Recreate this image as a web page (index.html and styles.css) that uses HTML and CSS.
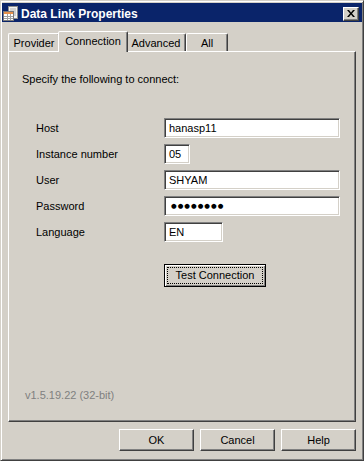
FILE: index.html
```html
<!DOCTYPE html>
<html>

<head>
    <title>Data Link Properties</title>
    <link rel="stylesheet" href="styles.css">
</head>

<body>
    <div class="window">
        <div class="titlebar">
            <svg class="app-icon" width="16" height="16" viewBox="0 0 16 16">
                <rect x="5.5" y="0.5" width="9" height="12" fill="#f2f2f2" stroke="#8c8c8c" />
                <path d="M7 3h6M7 5h6M7 7h6M7 9h6" stroke="#b0b0b0" />
                <rect x="0.5" y="5.5" width="10" height="9" fill="#fff" stroke="#7a7a7a" />
                <rect x="1" y="6" width="9" height="2" fill="#e8904a" />
                <path d="M1 10.5h9M1 12.5h9M4.5 8v6M7.5 8v6" stroke="#a0a0a0" />
            </svg>
            <span class="title">Data Link Properties</span>
            <button class="close-btn">
                <svg width="8" height="7" viewBox="0 0 8 7">
                    <path d="M0 0h2l2 2.4L6 0h2L5 3.5 8 7H6L4 4.6 2 7H0l3-3.5z" fill="#000" />
                </svg>
            </button>
        </div>
        <div class="dialog-body">
            <div class="tabs">
                <div class="tab tab-provider">Provider</div>
                <div class="tab tab-connection active">Connection</div>
                <div class="tab tab-advanced">Advanced</div>
                <div class="tab tab-all">All</div>
            </div>
            <div class="panel">
                <p class="intro">Specify the following to connect:</p>
                <div class="form">
                    <label>Host</label>
                    <div class="field field-wide">hanasp11</div>
                    <label>Instance number</label>
                    <div class="field field-short">05</div>
                    <label>User</label>
                    <div class="field field-wide">SHYAM</div>
                    <label>Password</label>
                    <div class="field field-wide dots">●●●●●●●●</div>
                    <label>Language</label>
                    <div class="field field-medium">EN</div>
                </div>
                <button class="btn btn-default test-btn"><span class="focus-ring">Test Connection</span></button>
                <div class="version">v1.5.19.22 (32-bit)</div>
            </div>
            <div class="actions">
                <button class="btn btn-action">OK</button>
                <button class="btn btn-action">Cancel</button>
                <button class="btn btn-action">Help</button>
            </div>
        </div>
    </div>
</body>

</html>
```
FILE: styles.css
```css
body {
    margin: 0;
    font-family: "Liberation Sans", Arial, sans-serif;
    font-size: 11px;
    background: #d4d0c8;
}

.window {
    width: 364px;
    height: 461px;
    box-sizing: border-box;
    background: #d4d0c8;
    border: 1px solid;
    border-color: #d4d0c8 #404040 #404040 #d4d0c8;
    box-shadow: inset 1px 1px #fff, inset -1px -1px #808080;
    padding: 2px 1px 1px 1px;
    display: flex;
    flex-direction: column;
}

/* title bar */
.titlebar {
    height: 19px;
    box-sizing: border-box;
    background: #0a246a;
    color: #fff;
    display: flex;
    align-items: center;
    padding: 2px 3px 0 1px;
}

.app-icon {
    flex: none;
    margin-right: 2px;
}

.title {
    flex: 1;
    font-weight: bold;
    font-size: 12px;
}

.close-btn {
    width: 16px;
    height: 14px;
    padding: 0;
    background: #d4d0c8;
    border: 1px solid;
    border-color: #fff #404040 #404040 #fff;
    box-shadow: inset -1px -1px #808080;
    display: flex;
    align-items: center;
    justify-content: center;
}

/* tabs + panel */
.dialog-body {
    flex: 1;
    padding: 9px 6px 0 6px;
    display: flex;
    flex-direction: column;
}

.tabs {
    display: flex;
    height: 20px;
    align-items: flex-end;
}

.tab {
    height: 18px;
    box-sizing: border-box;
    border: 1px solid;
    border-bottom: none;
    border-color: #fff #404040 transparent #fff;
    box-shadow: inset -1px 0 #808080;
    border-radius: 2px 2px 0 0;
    display: flex;
    align-items: center;
    justify-content: center;
    padding-top: 1px;
}

.tab-provider {
    width: 52px;
}

.tab-connection {
    width: 66px;
}

.tab-advanced {
    width: 60px;
}

.tab-all {
    width: 42px;
}

.tab.active {
    width: 70px;
    height: 21px;
    margin: 0 -2px -1px;
    padding: 0 0 2px;
    background: #d4d0c8;
    z-index: 1;
}

.panel {
    height: 371px;
    box-sizing: border-box;
    border: 1px solid;
    border-color: #fff #404040 #404040 #fff;
    box-shadow: inset -1px -1px #808080;
    padding: 21px 13px 19px;
    display: flex;
    flex-direction: column;
    align-items: flex-start;
}

.intro {
    margin: 0;
    line-height: 13px;
}

.form {
    display: grid;
    grid-template-columns: 128px auto;
    grid-auto-rows: 20px;
    row-gap: 6px;
    margin: 32px 0 0 14px;
    align-items: center;
    justify-items: start;
}

.field {
    height: 20px;
    box-sizing: border-box;
    border: 1px solid;
    border-color: #808080 #fff #fff #808080;
    box-shadow: inset 1px 1px #404040, inset -1px -1px #d4d0c8;
    background: #fff;
    padding: 0 4px;
    line-height: 18px;
    white-space: nowrap;
}

.field-wide {
    width: 176px;
}

.field-short {
    width: 26px;
}

.field-medium {
    width: 59px;
}

.dots {
    font-family: "DejaVu Sans", sans-serif;
    font-size: 6.5px;
    letter-spacing: 1px;
    padding-left: 6px;
}

/* buttons */
.btn {
    font: inherit;
    color: #000;
    background: #d4d0c8;
    border: 1px solid;
    border-color: #fff #404040 #404040 #fff;
    box-shadow: inset -1px -1px #808080;
    padding: 0;
}

.btn-default {
    border-color: #000;
    box-shadow: inset 1px 1px #fff, inset -1px -1px #808080;
    padding: 2px;
}

.test-btn {
    width: 102px;
    height: 23px;
    margin: 22px 0 0 142px;
}

.focus-ring {
    display: block;
    height: 17px;
    box-sizing: border-box;
    border: 1px dotted #000;
    line-height: 15px;
}

.version {
    margin-top: auto;
    padding-left: 3px;
    line-height: 13px;
    color: #808080;
}

.actions {
    display: flex;
    justify-content: flex-end;
    gap: 6px;
    margin-top: 7px;
}

.btn-action {
    width: 75px;
    height: 22px;
}
```
